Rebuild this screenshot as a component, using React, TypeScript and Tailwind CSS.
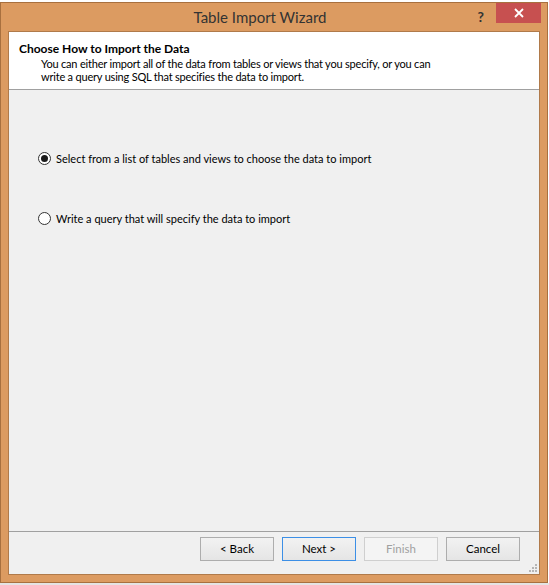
const ui = { fontFamily: 'Lato, "Noto Sans", Arial, sans-serif' }

function Radio({ checked, label }: { checked?: boolean; label: string }) {
  return (
    <label className="flex items-center gap-[5px] text-[11px] leading-[15px] text-black">
      <span className="flex h-[13px] w-[13px] items-center justify-center rounded-full border border-[#333] bg-white">
        {checked && <span className="h-[7px] w-[7px] rounded-full bg-[#1a1a1a]" />}
      </span>
      {label}
    </label>
  )
}

function Btn({ children, focus, disabled }: { children: string; focus?: boolean; disabled?: boolean }) {
  const base = 'flex h-[24px] w-[74px] items-center justify-center border text-[11.5px]'
  if (disabled) return <div className={`${base} border-[#cfcfcf] bg-[#f4f4f4] text-[#a0a0a0]`}>{children}</div>
  return (
    <div
      className={`${base} bg-linear-to-b from-[#f2f2f2] to-[#e5e5e5] text-black ${
        focus ? 'border-[#3c8fe6]' : 'border-[#adadad]'
      }`}
    >
      {children}
    </div>
  )
}

export default function App() {
  return (
    <div className="flex h-[585px] w-[549px] flex-col bg-white pt-[2px]" style={ui}>
      <div className="flex h-[581px] w-[548px] flex-col border border-[#a8703f] bg-[#dc9b61]">
        {/* title bar */}
        <div className="relative flex h-[28px] items-center justify-center pr-[28px]">
          <span className="text-[15px] text-[#333]">Table Import Wizard</span>
          <div className="absolute right-[6px] top-0 flex items-start">
            <span className="mr-[12px] mt-[3px] text-[14px] font-bold text-[#333]">?</span>
            <div className="flex h-[20px] w-[45px] items-center justify-center bg-[#c75050]">
              <svg width="10" height="10" viewBox="0 0 10 10">
                <path d="M1 1L9 9M9 1L1 9" stroke="white" strokeWidth="1.8" />
              </svg>
            </div>
          </div>
        </div>

        {/* body */}
        <div className="mx-[7px] mb-[7px] flex flex-1 flex-col border border-[#b07a4a] bg-[#f0f0f0]">
          <div className="h-[58px] border-b border-[#a0a0a0] bg-white pl-[10px] pt-[10px] text-[12px] leading-[14px] text-black">
            <div className="font-bold">Choose How to Import the Data</div>
            <div className="mt-[1px] pl-[22px] text-[11px] leading-[13px] tracking-[-0.2px]">
              You can either import all of the data from tables or views that you specify, or you can
              <br />
              write a query using SQL that specifies the data to import.
            </div>
          </div>

          <div className="flex flex-1 flex-col gap-[45px] pl-[29px] pt-[61px]">
            <Radio checked label="Select from a list of tables and views to choose the data to import" />
            <Radio label="Write a query that will specify the data to import" />
          </div>

          <div className="relative flex h-[43px] justify-end gap-[8px] border-t border-[#a0a0a0] pr-[19px] pt-[5px]">
            <Btn>&lt; Back</Btn>
            <Btn focus>Next &gt;</Btn>
            <Btn disabled>Finish</Btn>
            <Btn>Cancel</Btn>
            <svg className="absolute bottom-[2px] right-[2px]" width="8" height="8" viewBox="0 0 8 8" fill="#b5b5b5">
              <rect x="6" y="0" width="2" height="2" />
              <rect x="3" y="3" width="2" height="2" />
              <rect x="6" y="3" width="2" height="2" />
              <rect x="0" y="6" width="2" height="2" />
              <rect x="3" y="6" width="2" height="2" />
              <rect x="6" y="6" width="2" height="2" />
            </svg>
          </div>
        </div>
      </div>
      <div className="flex-1 bg-[#e4e4e4]" />
    </div>
  )
}
